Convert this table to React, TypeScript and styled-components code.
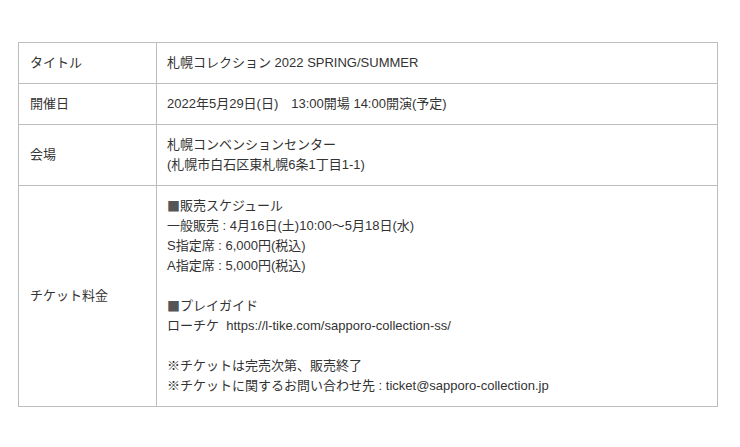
import React from "react";
import styled, { createGlobalStyle } from "styled-components";

const GlobalStyle = createGlobalStyle`
  body {
    margin: 0;
    background: #fff;
    font-family: "Liberation Sans", "Noto Sans CJK JP", sans-serif;
    color: #333;
  }
`;

const Wrapper = styled.div`
  padding: 42px 22px 0 18px;
`;

const Table = styled.table`
  width: 700px;
  border-collapse: collapse;
  font-size: 13px;
  line-height: 20px;
`;

const Label = styled.th`
  width: 115px;
  border: 1px solid #bdbdbd;
  padding: 10px 11px;
  text-align: left;
  font-weight: normal;
  vertical-align: middle;
`;

const Value = styled.td`
  border: 1px solid #bdbdbd;
  padding: 10px 10px;
  vertical-align: middle;
`;

const Line = styled.div`
  height: 20px;
  white-space: pre;
`;

const Square = styled.span`
  display: inline-block;
  height: 20px;
  vertical-align: top;
  font-family: "Noto Sans CJK JP", sans-serif;
  color: #555;
`;

const rows: { label: string; lines: string[] }[] = [
  { label: "タイトル", lines: ["札幌コレクション 2022 SPRING/SUMMER"] },
  { label: "開催日", lines: ["2022年5月29日(日)\u300013:00開場 14:00開演(予定)"] },
  {
    label: "会場",
    lines: ["札幌コンベンションセンター", "(札幌市白石区東札幌6条1丁目1-1)"],
  },
  {
    label: "チケット料金",
    lines: [
      "■販売スケジュール",
      "一般販売 : 4月16日(土)10:00〜5月18日(水)",
      "S指定席 : 6,000円(税込)",
      "A指定席 : 5,000円(税込)",
      "",
      "■プレイガイド",
      "ローチケ  https://l-tike.com/sapporo-collection-ss/",
      "",
      "※チケットは完売次第、販売終了",
      "※チケットに関するお問い合わせ先 : ticket@sapporo-collection.jp",
    ],
  },
];

export default function App() {
  return (
    <>
      <GlobalStyle />
      <Wrapper>
        <Table>
          <tbody>
            {rows.map((row) => (
              <tr key={row.label}>
                <Label>{row.label}</Label>
                <Value>
                  {row.lines.map((line, i) =>
                    line.startsWith("■") ? (
                      <Line key={i}>
                        <Square>■</Square>
                        {line.slice(1)}
                      </Line>
                    ) : (
                      <Line key={i}>{line}</Line>
                    )
                  )}
                </Value>
              </tr>
            ))}
          </tbody>
        </Table>
      </Wrapper>
    </>
  );
}
